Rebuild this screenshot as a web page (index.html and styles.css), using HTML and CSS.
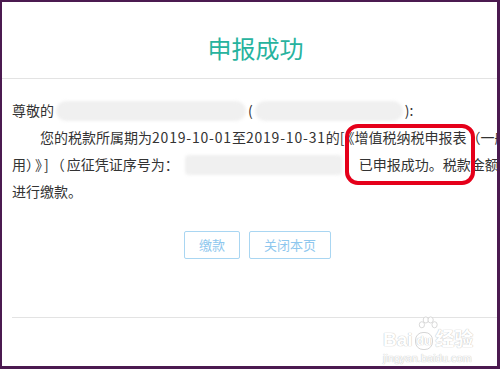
FILE: index.html
```html
<!DOCTYPE html>
<html lang="zh-CN">
<head>
<meta charset="utf-8">
<title>申报成功</title>
<link rel="stylesheet" href="styles.css">
</head>
<body>
<div class="frame">
  <div class="header"><h1 class="title">申报成功</h1></div>
  <div class="content">
    <p class="line">尊敬的<span class="blur b1"></span>(<span class="blur b2"></span>):</p>
    <p class="line indent">您的税款所属期为<span class="num">2019-10-01</span>至<span class="num">2019-10-31</span>的[<span class="bk">《</span>增值税纳税申报表（一般</p>
    <p class="line">用）<span class="sp">》</span>]<span class="sp">（</span>应征凭证序号为：<span class="blur b3"></span>已申报成功。税款金额</p>
    <p class="line">进行缴款。</p>
  </div>
  <div class="actions">
    <button class="btn btn-pay">缴款</button>
    <button class="btn btn-close">关闭本页</button>
  </div>
  <div class="footer"></div>
  <div class="highlight"></div>
  <div class="watermark">
    <svg class="wm-paw" width="26" height="16" viewBox="0 0 26 16">
      <g fill="#fff" stroke="#d4d4d4" stroke-width="1">
        <ellipse cx="6" cy="10" rx="3" ry="3.5"/>
        <ellipse cx="10.5" cy="4.5" rx="3" ry="3.5"/>
        <ellipse cx="16" cy="4.5" rx="3" ry="3.5"/>
        <ellipse cx="20.5" cy="10" rx="3" ry="3.5"/>
      </g>
    </svg>
    <div class="wm-logo">Bai<span class="wm-du">du</span>经验</div>
    <div class="wm-url">jingyan.baidu.com</div>
  </div>
</div>
</body>
</html>
```
FILE: styles.css
```css
html, body {
  margin: 0;
  padding: 0;
  background: #fff;
}
.frame {
  position: relative;
  width: 500px;
  height: 369px;
  box-sizing: border-box;
  border-style: solid;
  border-color: #4b1a50;
  border-width: 2px 3px 3px 2px;
  overflow: hidden;
  font-family: "Noto Sans CJK SC", "Noto Sans", sans-serif;
  color: #333;
}
.header {
  height: 77px;
  border-bottom: 1px solid #e3e3e3;
  box-sizing: border-box;
  padding-left: 12px;
  display: flex;
  align-items: center;
  justify-content: center;
}
.title {
  margin: 0;
  padding-top: 16px;
  font-size: 24px;
  font-weight: normal;
  color: #27b39e;
  line-height: 32px;
}
.content {
  padding: 18px 0 0 10px;
  font-size: 14px;
  line-height: 27px;
  white-space: nowrap;
}
.line {
  margin: 0;
}
.indent {
  text-indent: 28px;
}
.num {
  letter-spacing: 0.8px;
}
.bk {
  margin-left: 3px;
}
.sp {
  margin: 0 2px;
}
.blur {
  display: inline-block;
  height: 20px;
  vertical-align: -5px;
  background: #f0f0f0;
  border-radius: 10px;
  filter: blur(1.5px);
}
.b1 { width: 190px; margin: 0 2px; }
.b2 { width: 148px; margin: 0 2px; }
.b3 { width: 157px; margin: 0 17px 0 6px; border-radius: 4px; }
.actions {
  display: flex;
  gap: 9px;
  padding: 26px 0 0 182px;
}
.btn {
  height: 28px;
  padding: 0;
  background: #fff;
  border: 1px solid #a9d6f2;
  border-radius: 2px;
  color: #8ec7ee;
  font-family: "Noto Sans CJK SC", "Noto Sans", sans-serif;
  font-size: 13px;
  line-height: 26px;
}
.btn-pay { width: 56px; }
.btn-close { width: 82px; }
.footer {
  margin: 58px 0 0 10px;
  border-top: 1px solid #e3e3e3;
}
.highlight {
  position: absolute;
  left: 343px;
  top: 122px;
  width: 130px;
  height: 61px;
  box-sizing: border-box;
  border: 4px solid #e5001a;
  border-radius: 13px;
}
.watermark {
  position: absolute;
  left: 381px;
  top: 314px;
  width: 96px;
  color: #fff;
  text-shadow: 0 0 1px #c4c4c4, 0 0 1px #c4c4c4;
  font-family: "Liberation Sans", "Noto Sans CJK SC", sans-serif;
}
.wm-paw {
  display: block;
  margin-left: 32px;
  height: 14px;
}
.wm-logo {
  font-size: 19px;
  font-weight: bold;
  line-height: 20px;
  white-space: nowrap;
}
.wm-du {
  display: inline-block;
  font-size: 12px;
  line-height: 16px;
  vertical-align: 1px;
  border: 1px solid #d6d6d6;
  border-radius: 8px;
  padding: 0 1px;
  margin: 0 2px;
}
.wm-url {
  font-size: 11px;
  line-height: 13px;
  padding-top: 2px;
  white-space: nowrap;
}
```
